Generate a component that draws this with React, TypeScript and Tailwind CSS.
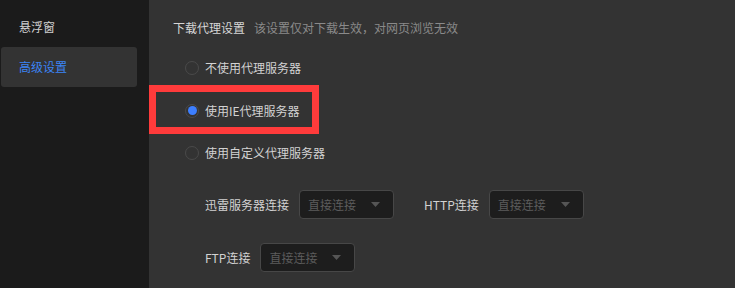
import React from "react";

const font = { fontFamily: '"Noto Sans CJK SC", "Noto Sans", sans-serif' };

function Radio({ checked, label }: { checked?: boolean; label: string }) {
  return (
    <div className="flex h-[20px] items-center">
      <span className="flex h-[14px] w-[14px] items-center justify-center rounded-full border border-[#4a4a4a]">
        {checked && <span className="h-[9px] w-[9px] rounded-full bg-[#3d7fff]" />}
      </span>
      <span className="ml-[6px] text-[12px] leading-[18px] text-[#d2d2d2]">{label}</span>
    </div>
  );
}

function Select() {
  return (
    <div className="flex h-[29px] w-[95px] items-center justify-between rounded-[4px] border border-[#474747] bg-[#1d1d1d] pl-[8px] pr-[13px]">
      <span className="text-[12px] leading-[18px] text-[#5c5c5c]">直接连接</span>
      <svg width="9" height="5" viewBox="0 0 9 5">
        <path d="M0 0 L9 0 L4.5 5 Z" fill="#555555" />
      </svg>
    </div>
  );
}

export default function App() {
  return (
    <div className="relative flex h-[288px] w-[735px] overflow-hidden bg-[#333333]" style={font}>
      <div className="flex w-[149px] shrink-0 flex-col bg-[#1b1b1b] pt-[7px]">
        <div className="flex h-[40px] items-center pl-[19px] text-[12px] text-[#d0d0d0]">悬浮窗</div>
        <div className="ml-[1px] flex h-[40px] w-[136px] items-center rounded-[3px] bg-[#333333] pl-[18px] text-[12px] text-[#3b84f5]">
          高级设置
        </div>
      </div>
      <div className="flex flex-1 flex-col pl-[24px] pt-[19px]">
        <div className="flex h-[18px] items-center">
          <span className="text-[12px] leading-[18px] text-[#d6d6d6]">下载代理设置</span>
          <span className="ml-[9px] text-[12px] leading-[18px] text-[#8a8a8a]">该设置仅对下载生效，对网页浏览无效</span>
        </div>
        <div className="ml-[12px] mt-[21px] flex flex-col gap-[22.5px]">
          <Radio label="不使用代理服务器" />
          <Radio checked label="使用IE代理服务器" />
          <Radio label="使用自定义代理服务器" />
        </div>
        <div className="ml-[32px] mt-[27px] flex flex-col gap-[24px]">
          <div className="flex items-center">
            <span className="text-[12px] leading-[18px] text-[#d2d2d2]">迅雷服务器连接</span>
            <div className="ml-[10px]">
              <Select />
            </div>
            <span className="ml-[30px] text-[12px] leading-[18px] text-[#d2d2d2]">HTTP连接</span>
            <div className="ml-[10px]">
              <Select />
            </div>
          </div>
          <div className="flex items-center">
            <span className="text-[12px] leading-[18px] text-[#d2d2d2]">FTP连接</span>
            <div className="ml-[10px]">
              <Select />
            </div>
          </div>
        </div>
      </div>
      <div className="pointer-events-none absolute left-[149px] top-[85px] h-[49px] w-[170px] border-[7px] border-[#ff3b3b]" />
    </div>
  );
}
